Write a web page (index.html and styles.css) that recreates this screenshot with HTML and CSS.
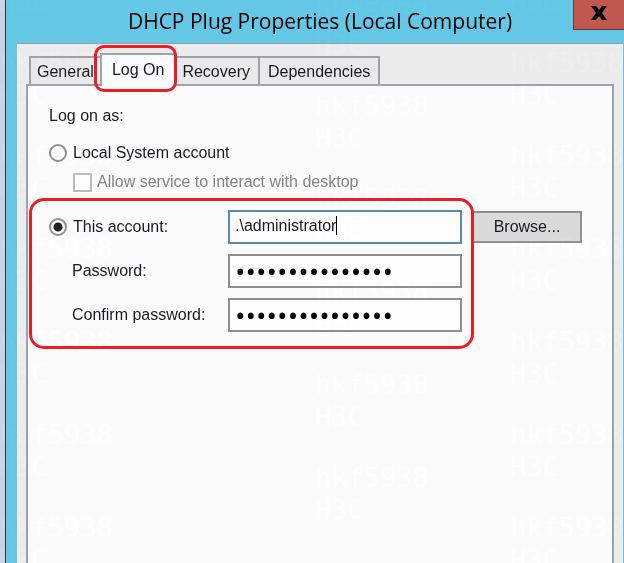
FILE: index.html
```html
<!DOCTYPE html>
<html lang="en">
<head>
	<meta charset="UTF-8">
	<meta name="viewport" content="width=device-width, initial-scale=1.0">
	<title>DHCP Plug Properties (Local Computer)</title>

	<link rel="stylesheet" href="styles.css">
</head>
<body>
	<div class="window">
		<header class="titlebar">
			<h1 class="titlebar__text">DHCP Plug Properties (Local Computer)</h1>
			<button class="titlebar__close" type="button" aria-label="Close">
				<svg width="16" height="14" viewBox="0 0 16 14">
					<path d="M0 0h5l3 4 3-4h5l-5 7 5 7h-5l-3-4-3 4H0l5-7z" fill="#000"/>
				</svg>
			</button>
		</header>

		<main class="dialog">
			<div class="tabs" role="tablist">
				<button class="tab" type="button" role="tab">General</button>
				<button class="tab tab--active" type="button" role="tab" aria-selected="true">Log On</button>
				<button class="tab" type="button" role="tab">Recovery</button>
				<button class="tab" type="button" role="tab">Dependencies</button>
			</div>

			<form class="page">
				<p class="page__title">Log on as:</p>
				<label class="option">
					<input class="radio" type="radio" name="account">
					Local System account
				</label>
				<label class="option option--sub">
					<input class="checkbox" type="checkbox" disabled>
					Allow service to interact with desktop
				</label>

				<div class="account">
					<div class="account__fields">
						<label class="option option--account">
							<input class="radio" type="radio" name="account" checked>
							This account:
						</label>
						<div class="field-wrap">
							<input class="field field--focus" type="text" aria-label="Account name" value=".\administrator">
							<span class="caret"></span>
						</div>
						<label class="account__label" for="password">Password:</label>
						<input class="field field--password" type="password" id="password" value="abcdefghijklmno">
						<label class="account__label" for="confirm">Confirm password:</label>
						<input class="field field--password" type="password" id="confirm" value="abcdefghijklmno">
					</div>
					<button class="browse" type="button">Browse...</button>
				</div>
			</form>
		</main>
	</div>

	<div class="watermark" aria-hidden="true">
		<div class="watermark__col watermark__col--left">
			<p>hkf5938<br>H3C</p>
			<p>hkf5938<br>H3C</p>
			<p>hkf5938<br>H3C</p>
			<p>hkf5938<br>H3C</p>
			<p>hkf5938<br>H3C</p>
			<p>hkf5938<br>H3C</p>
			<p>hkf5938<br>H3C</p>
		</div>
		<div class="watermark__col watermark__col--middle">
			<p>hkf5938<br>H3C</p>
			<p>hkf5938<br>H3C</p>
			<p>hkf5938<br>H3C</p>
			<p>hkf5938<br>H3C</p>
			<p>hkf5938<br>H3C</p>
			<p>hkf5938<br>H3C</p>
		</div>
		<div class="watermark__col watermark__col--right">
			<p>hkf5938<br>H3C</p>
			<p>hkf5938<br>H3C</p>
			<p>hkf5938<br>H3C</p>
			<p>hkf5938<br>H3C</p>
			<p>hkf5938<br>H3C</p>
			<p>hkf5938<br>H3C</p>
			<p>hkf5938<br>H3C</p>
		</div>
	</div>
</body>
</html>
```

FILE: styles.css
```css
* { box-sizing: border-box }
body {
	position: relative;
	display: flex;
	min-height: 100vh;
	margin: 0;
	padding-left: 5px;
	overflow: hidden;
	background: #c8d1e4;
	color: #1a1a22;
	font-family: "Liberation Sans", Arial, sans-serif;
	font-size: 16px;
	line-height: 20px;
}
button,
input {
	margin: 0;
	color: inherit;
	font: inherit;
}
.window {
	display: flex;
	flex: 1;
	flex-direction: column;
	padding-right: 1px;
	border-left: 1px solid #2b3440;
	background: #64c7e6;
}

/* title bar */
.titlebar {
	position: relative;
	height: 43px;
	padding-left: 11px;
}
.titlebar__text {
	margin: 0;
	color: #000;
	font-family: "Open Sans", "Noto Sans", sans-serif;
	font-size: 21px;
	font-weight: 400;
	line-height: 43px;
	text-align: center;
}
.titlebar__close {
	position: absolute;
	top: 0;
	right: -1px;
	display: flex;
	width: 51px;
	height: 30px;
	padding: 0 0 3px;
	justify-content: center;
	align-items: center;
	border: 1px solid #6e3a3c;
	border-width: 0 0 1px 1px;
	background: #c0584f;
}

.dialog {
	display: flex;
	flex: 1;
	flex-direction: column;
	margin-left: 11px;
	padding: 9px 9px 0;
	border-top: 1px solid #8fa3ab;
	background: #ececec;
}

/* tabs */
.tabs {
	display: flex;
	padding-left: 3px;
	align-items: flex-end;
}
.tab {
	height: 28px;
	padding: 2px 8px 0;
	border: 2px solid #a0a1a9;
	border-width: 2px 2px 0 0;
	background: #e9e9e9;
}
.tab:first-child {
	padding: 2px 6px 0;
	border-left-width: 2px;
	border-right: 0;
}
.tab--active {
	position: relative;
	height: 33px;
	margin-bottom: -2px;
	padding: 0 10px 2px;
	border-left-width: 2px;
	border-right-width: 0;
	background: #fbfbfb;
}
.tab--active::after {
	content: "";
	position: absolute;
	inset: -10px -3px -6px -8px;
	border: 3px solid #ec1c24;
	border-radius: 10px;
}

.page {
	flex: 1;
	padding: 20px 0 0;
	border: 2px solid #a0a1a9;
	border-bottom: 0;
	background: #fbfbfb;
}
.page__title {
	margin: 0 0 17px 21px;
}

/* radio and tick box rows */
.option {
	display: flex;
	margin-left: 21px;
	align-items: center;
	gap: 6px;
}
.option--sub {
	margin: 9px 0 6px 45px;
	gap: 5px;
	color: #838383;
}
.option--account {
	margin-left: 0;
}
.radio,
.checkbox {
	flex: none;
	appearance: none;
	border: 2px solid #8e8e8e;
	background: #fdfdfd;
}
.radio {
	width: 18px;
	height: 18px;
	border-radius: 50%;
}
.radio:checked {
	background: radial-gradient(circle, #222 4px, #fdfdfd 5px);
}
.checkbox {
	width: 19px;
	height: 19px;
	border-color: #bcbcbc;
}

.account {
	display: flex;
	margin-left: 1px;
	align-items: flex-start;
}
.account__fields {
	display: grid;
	grid-template-columns: 179px 234px;
	row-gap: 10px;
	align-items: center;
	padding: 9px 9px 14px 17px;
	border: 3px solid #ec1c24;
	border-radius: 15px;
}
.account__label {
	padding-left: 23px;
}
.field-wrap {
	position: relative;
}
.field {
	display: block;
	width: 100%;
	height: 34px;
	padding: 0 5px;
	border: 2px solid #8e8e8e;
	background: #fdfdfd;
}
.field--focus {
	border-color: #5b8ab0;
	padding-bottom: 3px;
}
.field--password {
	color: #000;
	font-family: "Open Sans", sans-serif;
	font-size: 28px;
}
.caret {
	position: absolute;
	top: 6px;
	left: 108px;
	width: 1px;
	height: 19px;
	background: #000;
}
.browse {
	width: 108px;
	height: 32px;
	margin-top: 13px;
	border: 2px solid #8e8e8e;
	border-left-width: 0;
	background: #dadada;
}

/* repeated mark over the whole screen, lightens only what is already pale */
.watermark {
	position: absolute;
	inset: 0;
	overflow: hidden;
	color: #030303;
	font-family: "DejaVu Sans Mono", monospace;
	font-size: 27px;
	line-height: 32px;
	mix-blend-mode: color-dodge;
	pointer-events: none;
}
.watermark p {
	height: 64px;
	margin: 0 0 29px;
}
.watermark__col {
	position: absolute;
}
.watermark__col--left {
	top: -46px;
	left: -1px;
}
.watermark__col--middle {
	top: -3px;
	left: 315px;
}
.watermark__col--right {
	top: -46px;
	left: 510px;
}
```
